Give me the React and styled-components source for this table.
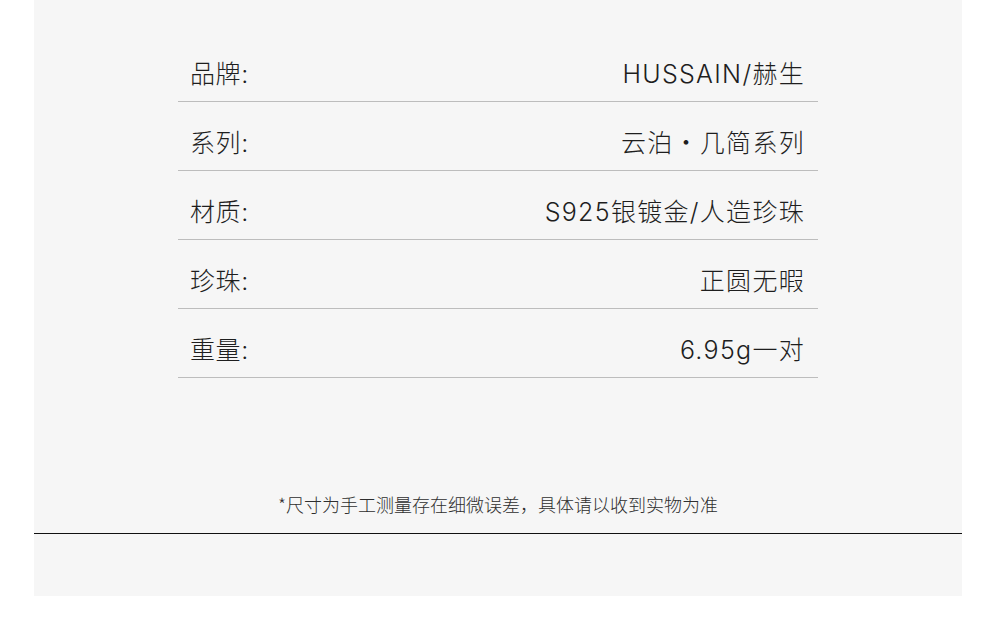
import React from "react";
import styled, { createGlobalStyle } from "styled-components";

const Global = createGlobalStyle`
  html, body { margin: 0; padding: 0; background: #ffffff; }
  body { font-family: "Inter", "Noto Sans CJK SC", sans-serif; }
`;

const Page = styled.div`
  width: 1000px;
  height: 632px;
  background: #ffffff;
`;

const Panel = styled.section`
  margin-left: 34px;
  width: 928px;
  height: 596px;
  background: #f6f6f6;
  padding-top: 33px;
  box-sizing: border-box;
  display: flex;
  flex-direction: column;
`;

const Table = styled.div`
  width: 640px;
  margin-left: 144px;
  display: flex;
  flex-direction: column;
`;

const Row = styled.div`
  height: 69px;
  box-sizing: border-box;
  padding: 14px 13px 0 12px;
  border-bottom: 1px solid #bdbdbd;
  display: flex;
  align-items: center;
  justify-content: space-between;
  font-size: 25px;
  line-height: 30px;
  font-weight: 300;
  color: #1e1e1e;
`;

const Label = styled.span`
  font-family: "Inter", "Noto Sans CJK SC", sans-serif;
  letter-spacing: 0.6px;
`;

const Value = styled.span`
  font-family: "Inter", "Noto Sans CJK SC", sans-serif;
  letter-spacing: 1.3px;
`;

const Note = styled.p`
  margin: 114px 0 0;
  text-align: center;
  font-size: 18px;
  line-height: 24px;
  font-weight: 300;
  color: #2e2e2e;
  font-family: "Noto Sans CJK SC", sans-serif;
`;

const Rule = styled.hr`
  margin: 17px 0 0;
  border: none;
  height: 1px;
  background: #111111;
`;

const rows = [
  ["品牌:", "HUSSAIN/赫生"],
  ["系列:", "云泊・几简系列"],
  ["材质:", "S925银镀金/人造珍珠"],
  ["珍珠:", "正圆无暇"],
  ["重量:", "6.95g一对"],
];

export default function App() {
  return (
    <Page>
      <Global />
      <Panel>
        <Table>
          {rows.map(([k, v]) => (
            <Row key={k}>
              <Label>{k}</Label>
              <Value>{v}</Value>
            </Row>
          ))}
        </Table>
        <Note>*尺寸为手工测量存在细微误差，具体请以收到实物为准</Note>
        <Rule />
      </Panel>
    </Page>
  );
}
